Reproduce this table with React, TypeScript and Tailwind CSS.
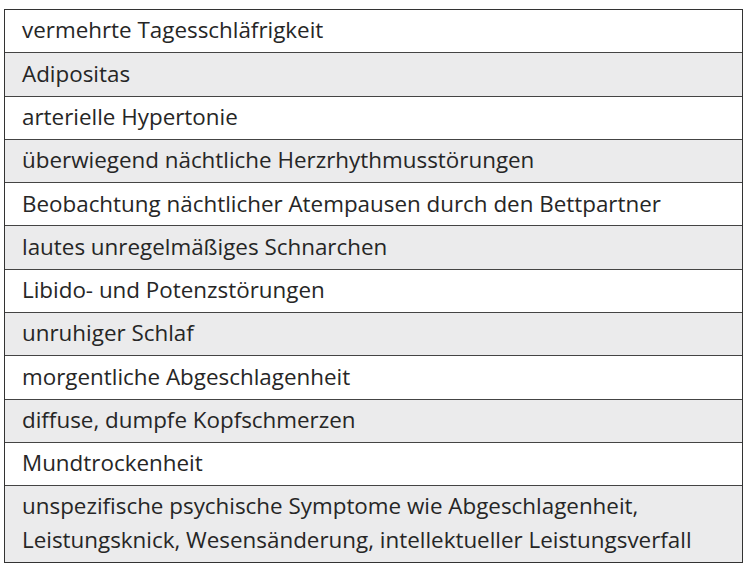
const rows = [
  'vermehrte Tagesschläfrigkeit',
  'Adipositas',
  'arterielle Hypertonie',
  'überwiegend nächtliche Herzrhythmusstörungen',
  'Beobachtung nächtlicher Atempausen durch den Bettpartner',
  'lautes unregelmäßiges Schnarchen',
  'Libido- und Potenzstörungen',
  'unruhiger Schlaf',
  'morgentliche Abgeschlagenheit',
  'diffuse, dumpfe Kopfschmerzen',
  'Mundtrockenheit',
];

export default function App() {
  return (
    <div className="w-[750px] h-[570px] bg-white pt-[9px] pl-[4px] font-['Open_Sans',sans-serif] text-[#262626]">
      <div className="w-[739px] border border-[#333] border-t-[1.5px]">
        {rows.map((r, i) => (
          <div
            key={r}
            className={`h-[43.3px] flex items-center px-[17px] pb-[2px] text-[22.4px] border-b-[1.5px] border-[#444] ${
              i % 2 === 1 ? 'bg-[#ebebec]' : 'bg-white'
            }`}
          >
            {r}
          </div>
        ))}
        <div className="h-[76px] flex flex-col justify-center px-[17px] pb-[2px] text-[22.4px] leading-[34px] bg-[#ebebec]">
          <span>unspezifische psychische Symptome wie Abgeschlagenheit,</span>
          <span>Leistungsknick, Wesensänderung, intellektueller Leistungsverfall</span>
        </div>
      </div>
    </div>
  );
}
